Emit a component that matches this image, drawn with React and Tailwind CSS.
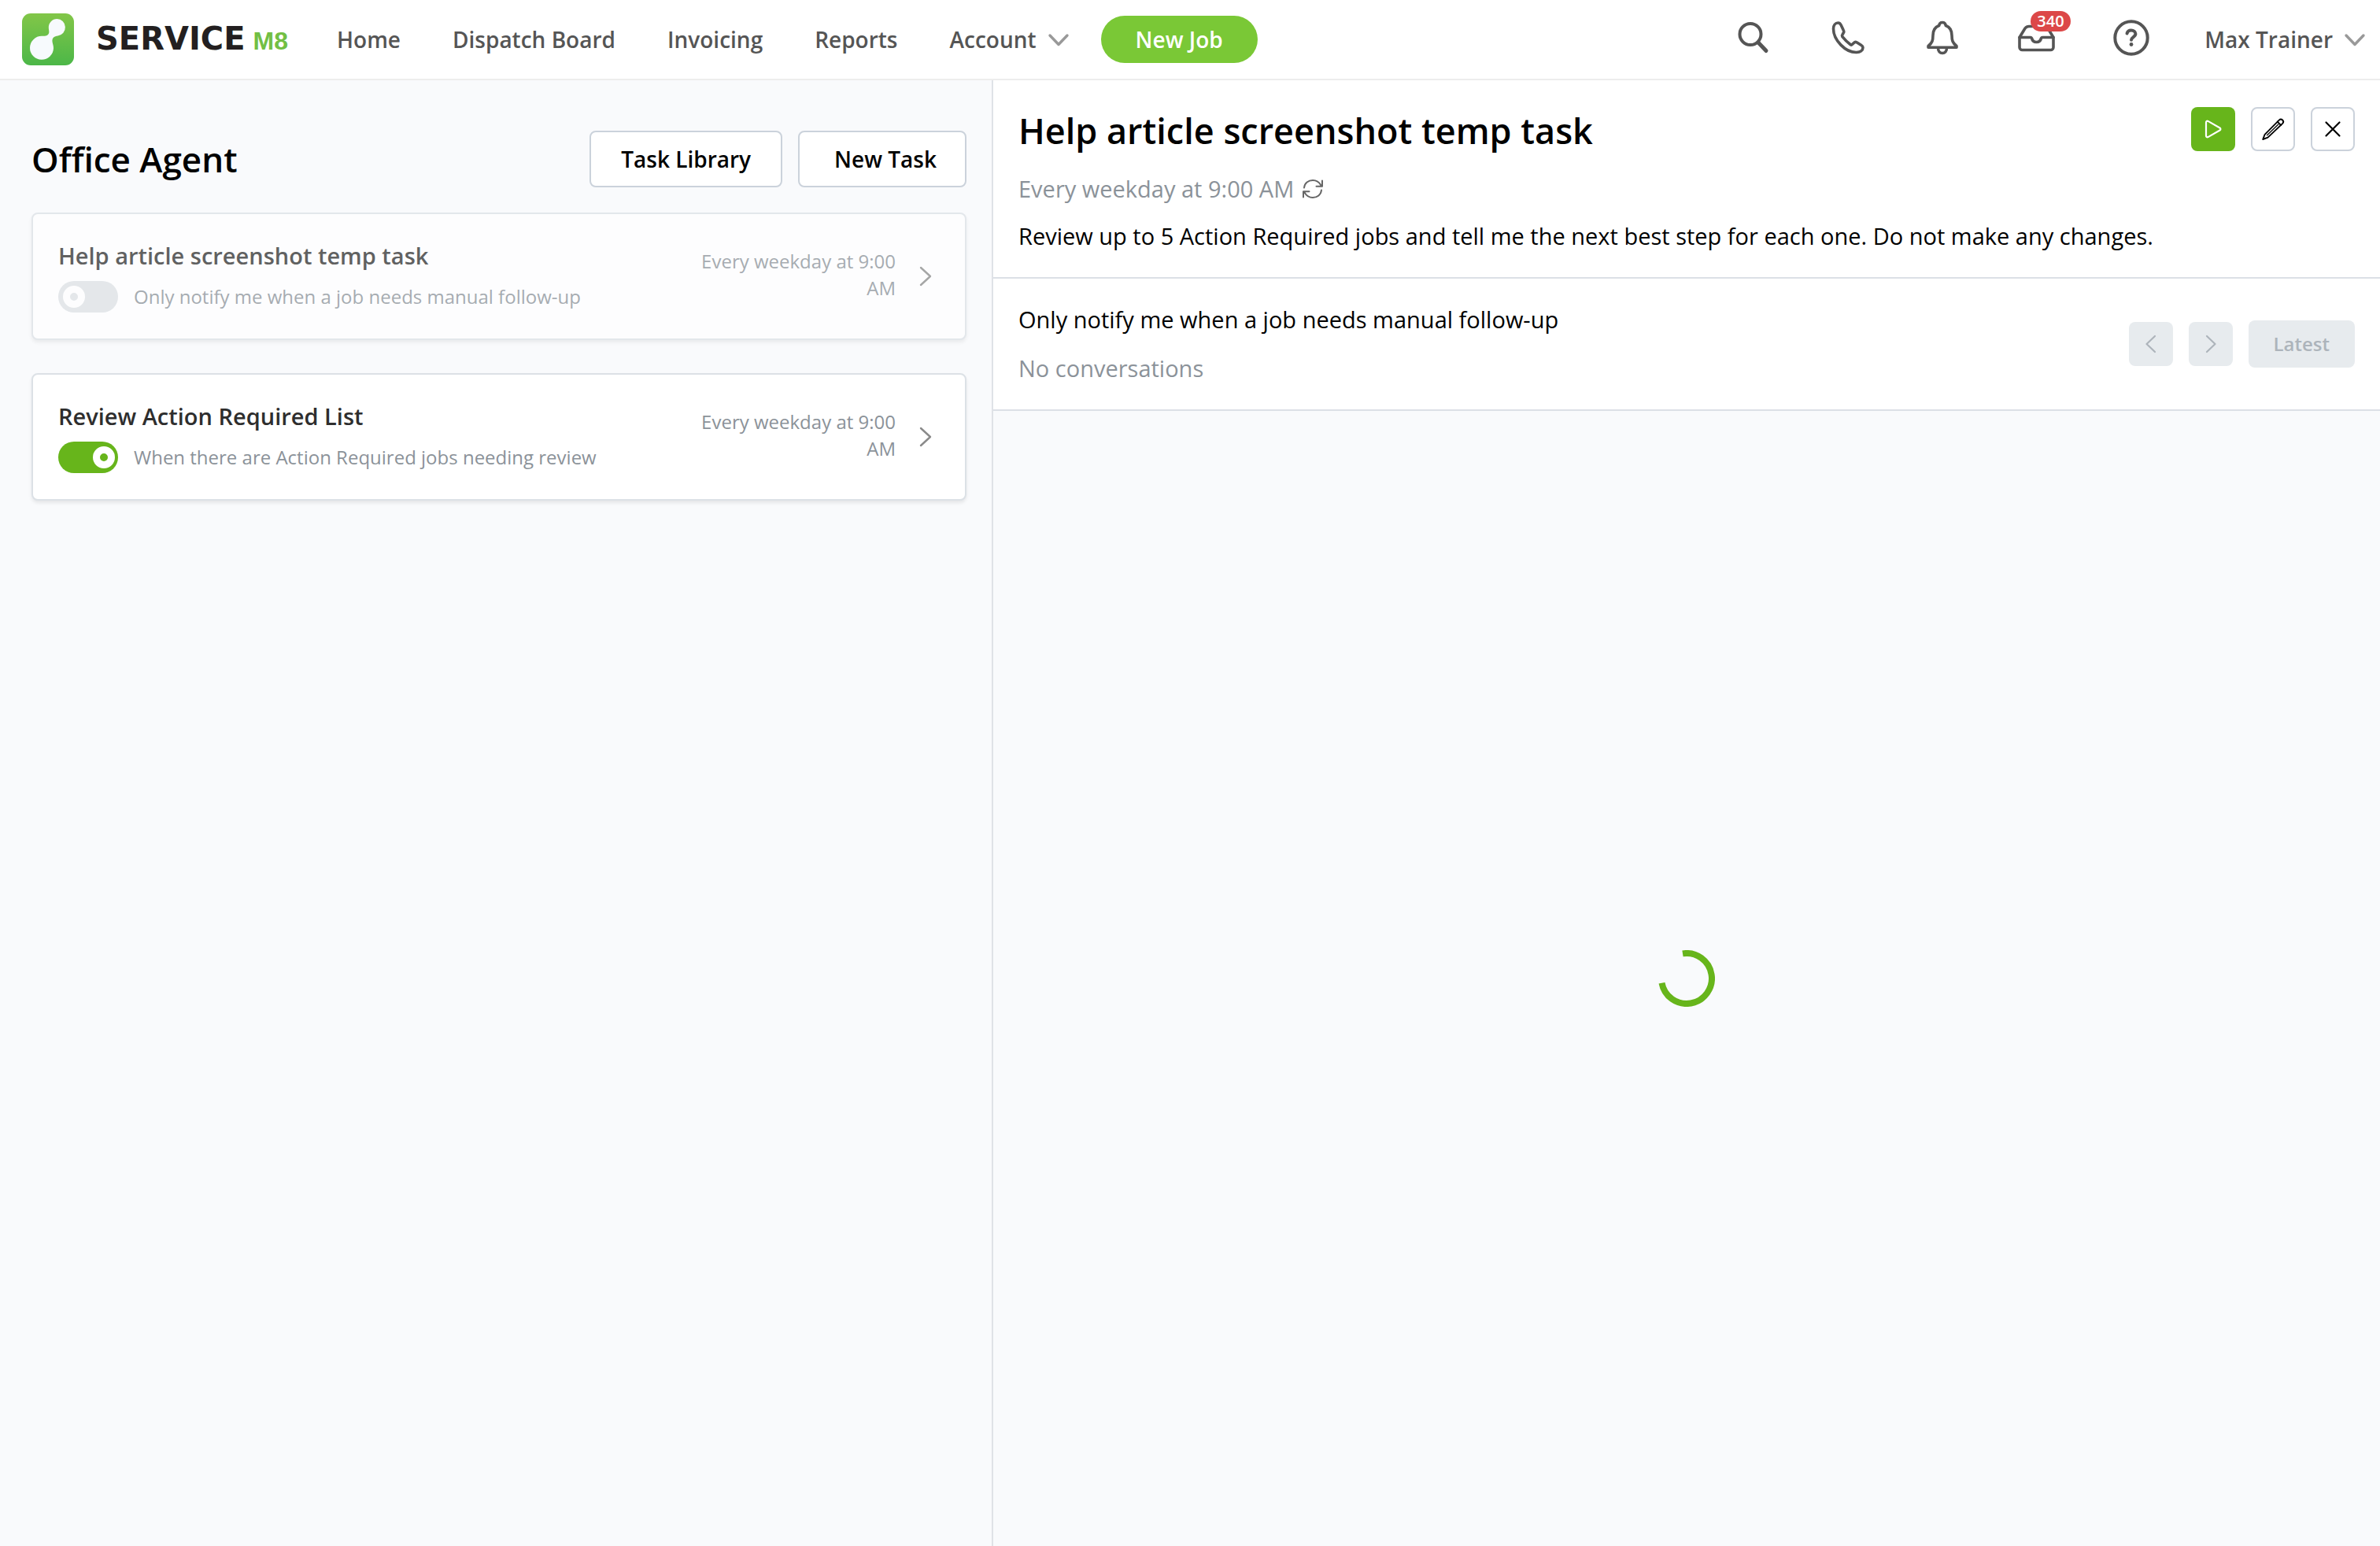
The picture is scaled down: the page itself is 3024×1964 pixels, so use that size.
import React, { useState } from 'react';

const NAV_LINKS = ['Home', 'Dispatch Board', 'Invoicing', 'Reports'];

const TASKS = [
  {
    id: 'help-article',
    title: 'Help article screenshot temp task',
    trigger: 'Only notify me when a job needs manual follow-up',
    schedule: 'Every weekday at 9:00 AM',
    enabled: false,
  },
  {
    id: 'action-required',
    title: 'Review Action Required List',
    trigger: 'When there are Action Required jobs needing review',
    schedule: 'Every weekday at 9:00 AM',
    enabled: true,
  },
];

function Icon({ className, box = '0 0 52 52', width = 4, children }) {
  return (
    <svg
      className={className}
      viewBox={box}
      fill="none"
      stroke="currentColor"
      strokeWidth={width}
      strokeLinecap="round"
      strokeLinejoin="round"
      aria-hidden="true"
    >
      {children}
    </svg>
  );
}

const SearchIcon = () => (
  <Icon className="size-[52px]">
    <circle cx="23" cy="19.5" r="13.5" />
    <path d="M33 30l10 10.5" strokeWidth="5" />
  </Icon>
);

const PhoneIcon = () => (
  <Icon className="size-[52px]" width={3.6}>
    <path d="M14.5 5c-3.5 0-6 3-6 7.5C8.5 27 24 43 38 42.5c4.5-.2 8-2.5 8-6 0-1.5-.8-2.3-2-3L38.5 30c-1.5-.8-3-.6-4 .4l-2.2 2.2c-.6.6-1.4.6-2 .1C26.5 29.8 22.5 25.8 19.7 22.3c-.5-.7-.4-1.4.1-2l1.3-2.3c.8-1 .9-2.2.2-3.4L18 7.5C17.2 6 16 5 14.5 5z" />
  </Icon>
);

const BellIcon = () => (
  <Icon className="size-[52px]" width={3.6}>
    <path d="M27 4.5c-2.5 0-4 1.7-4.3 4C17.5 10.5 15 15 15 21c0 6-.8 9.5-6 13.5V36.2H45V34.5c-5.2-4-6-7.5-6-13.5 0-6-2.5-10.5-7.7-12.5C31 6.2 29.5 4.5 27 4.5z" />
    <path d="M21.5 37c0 4 2.3 6.5 5.5 6.5s5.5-2.5 5.5-6.5" />
  </Icon>
);

const InboxIcon = () => (
  <Icon className="size-[52px]" width={3.6}>
    <path d="M5 23.5V36a3.5 3.5 0 0 0 3.5 3.5h36A3.5 3.5 0 0 0 48 36V23.5L41 12q-2-2.5-5-2.5H17q-3 0-5 2.5z" />
    <path d="M5 23.5H19q1 0 1.5 1c.8 3.5 3 5 6 5s5.2-1.5 6-5q.5-1 1.5-1H48" />
  </Icon>
);

const HelpIcon = () => (
  <Icon className="size-[52px]">
    <circle cx="27" cy="24" r="20.7" />
    <path d="M21.5 18.500c.6-2.700 2.600-4 5.300-4 3.200 0 5.600 1.800 5.600 4.600 0 4-5.400 4-5.400 7.700" />
    <circle cx="27" cy="32.5" r="2.4" fill="currentColor" stroke="none" />
  </Icon>
);

const ChevronDown = () => (
  <Icon className="w-7 h-[18px] text-[#999999]" box="0 0 28 18" width={3.4}>
    <path d="M3 4l11 11.5L25 4" />
  </Icon>
);

function Logo() {
  return (
    <a href="#home" aria-label="ServiceM8" className="flex items-center shrink-0">
      <svg className="size-[66px]" viewBox="0 0 66 66" aria-hidden="true">
        <defs>
          <linearGradient id="logo-green" x1="0" y1="0" x2="0" y2="1">
            <stop offset="0" stopColor="#82c648" />
            <stop offset="1" stopColor="#4cb748" />
          </linearGradient>
        </defs>
        <rect width="66" height="66" rx="11" fill="url(#logo-green)" />
        <path
          fill="#f7fafd"
          d="M44.5 7a10.8 10.8 0 0 1 1 21.5C41 29 38 31 38.5 36c.3 2.5 1.5 4.5 1.5 8.3a15 15 0 1 1-15-15.5c3.5 0 6 .2 8-1.8 2.5-2.5.8-5.5.8-9A10.8 10.8 0 0 1 44.5 7z"
        />
      </svg>
      <span className="ml-7 flex w-[244px] items-baseline justify-between leading-[60px] font-bold">
        <span className="font-['DejaVu_Sans',sans-serif] text-[40px] text-[#231f20]">SERVICE</span>
        <span className="font-['Liberation_Sans',sans-serif] text-[32px] text-[#72bf44]">M8</span>
      </span>
    </a>
  );
}

function TopBar() {
  return (
    <header className="flex items-center h-[102px] shrink-0 border-b-2 border-[#ededed] bg-white pl-7 pr-[18px] text-[28px] leading-10 font-semibold text-[#555555]">
      <Logo />
      <nav className="ml-[62px] flex items-center gap-[66px]">
        {NAV_LINKS.map((label) => (
          <a key={label} href="#nav">{label}</a>
        ))}
        <button className="flex items-center gap-3.5">
          Account
          <ChevronDown />
        </button>
      </nav>
      <button className="ml-10 h-[60px] rounded-full bg-[#7ac836] px-11 text-white">New Job</button>

      <div className="ml-auto flex items-center gap-[68px]">
        <button aria-label="Search"><SearchIcon /></button>
        <button aria-label="Phone"><PhoneIcon /></button>
        <button aria-label="Notifications"><BellIcon /></button>
        <button aria-label="Inbox" className="relative">
          <InboxIcon />
          <span className="absolute -top-2.5 left-[19px] h-[26px] rounded-full bg-[#dc4848] px-2 text-[20px] leading-[26px] text-white">
            340
          </span>
        </button>
        <button aria-label="Help"><HelpIcon /></button>
        <button className="flex items-center gap-3.5">
          Max Trainer
          <ChevronDown />
        </button>
      </div>
    </header>
  );
}

function TaskCard({ task, enabled, onToggle }) {
  return (
    <li
      className={`flex items-center gap-7 min-h-[162px] rounded-lg border-2 border-[#dce1e6] bg-white pl-8 pr-10 shadow-[0_3px_4px_rgba(0,0,0,0.08)] ${enabled ? '' : 'opacity-75'}`}
    >
      <div className="flex-1 min-w-0">
        <h3 className="text-[29px] leading-10 font-semibold text-[#2e2e2e]">{task.title}</h3>
        <label className="mt-3 flex items-center gap-5 text-2xl leading-10 text-[#8b9299]">
          <input
            type="checkbox"
            checked={enabled}
            onChange={onToggle}
            className="flex items-center w-[76px] h-10 shrink-0 appearance-none rounded-full bg-[#dde1e5] px-1.5 before:size-7 before:rounded-full before:border-[9px] before:border-white checked:justify-end checked:bg-[#67b51b] checked:px-1"
          />
          {task.trigger}
        </label>
      </div>
      <p className="w-64 shrink-0 pb-1 text-right text-2xl leading-[34px] text-[#8b9299]">{task.schedule}</p>
      <Icon className="w-5 h-7 shrink-0 text-[#8a8a8a]" box="0 0 20 28" width={2.4}>
        <path d="M4 3l12 11L4 25" />
      </Icon>
    </li>
  );
}

function TaskList() {
  const [enabled, setEnabled] = useState(() =>
    Object.fromEntries(TASKS.map((t) => [t.id, t.enabled]))
  );

  return (
    <section className="col-span-5 pt-16 pl-10 pr-8">
      <div className="flex items-center justify-between">
        <h1 className="text-[44px] leading-[60px] font-semibold">Office Agent</h1>
        <div className="flex gap-5 text-[28px] font-semibold">
          <button className="h-[72px] rounded-lg border-2 border-[#cbd2db] bg-white px-[38px]">Task Library</button>
          <button className="h-[72px] rounded-lg border-2 border-[#cbd2db] bg-white pl-11 pr-9">New Task</button>
        </div>
      </div>
      <ul className="mt-8 flex flex-col gap-[42px]">
        {TASKS.map((task) => (
          <TaskCard
            key={task.id}
            task={task}
            enabled={enabled[task.id]}
            onToggle={() => setEnabled({ ...enabled, [task.id]: !enabled[task.id] })}
          />
        ))}
      </ul>
    </section>
  );
}

function TaskDetail() {
  return (
    <section className="col-span-7 flex flex-col border-l-2 border-[#dfe2e7] text-[29px] leading-10">
      <div className="border-b-2 border-[#dce0e6] bg-white px-8 pt-[34px] pb-8">
        <div className="flex items-start justify-between">
          <h2 className="text-[45px] leading-[60px] font-semibold">Help article screenshot temp task</h2>
          <div className="flex gap-5">
            <button aria-label="Run task" className="flex items-center justify-center size-14 rounded-lg bg-[#67b51b] text-white">
              <Icon className="size-8" box="0 0 32 32" width={2.2}>
                <path d="M7 7.5v17c0 1.4 1.3 2.2 2.5 1.6L24.5 17.5c1.2-.7 1.2-2.3 0-3L9.5 5.9C8.3 5.3 7 6.1 7 7.5z" />
              </Icon>
            </button>
            <button aria-label="Edit task" className="flex items-center justify-center size-14 rounded-lg border-2 border-[#cbd2db] bg-white">
              <Icon className="size-8" box="0 0 32 32" width={1.9}>
                <path d="M3.2 29L5.6 22.8 23.8 4.6a3 3 0 0 1 4.4 4.300L9.500 26.600z" />
                <path d="M21.800 6.600l4.300 4.500" />
                <path d="M22.800 10L8.500 23.800" strokeWidth="1.2" />
              </Icon>
            </button>
            <button aria-label="Close" className="flex items-center justify-center size-14 rounded-lg border-2 border-[#cbd2db] bg-white">
              <Icon className="size-8" box="0 0 32 32" width={2.2}>
                <path d="M7.5 7.5l17 17M24.5 7.5l-17 17" />
              </Icon>
            </button>
          </div>
        </div>
        <p className="mt-6 flex items-center gap-2.5 text-[#8b9299]">
          Every weekday at 9:00 AM
          <Icon className="size-7 text-[#666666]" box="0 0 28 28" width={2}>
            <path d="M3 12.5C3.6 6.5 8.3 3 14 3c4.5 0 8.2 2.5 10.5 6.5M26 3.5v7.2h-7.5" />
            <path d="M25 15.5C24.4 21.5 19.7 25 14 25c-4.5 0-8.2-2.5-10.5-6.5M2 24.5v-7.2h7.5" />
          </Icon>
        </p>
        <p className="mt-5">
          Review up to 5 Action Required jobs and tell me the next best step for each one. Do not make any changes.
        </p>
      </div>

      <div className="flex items-center justify-between border-b-2 border-[#dce0e6] bg-white px-8 py-8">
        <div>
          <p>Only notify me when a job needs manual follow-up</p>
          <p className="mt-[22px] text-[#8b9299]">No conversations</p>
        </div>
        <div className="flex items-center gap-5 text-[#adb4bb]">
          <button disabled aria-label="Previous" className="flex items-center justify-center size-14 rounded-lg bg-[#e7ebee]">
            <Icon className="w-5 h-7" box="0 0 20 28" width={2.2}>
              <path d="M15 4L4.5 14 15 24" />
            </Icon>
          </button>
          <button disabled aria-label="Next" className="flex items-center justify-center size-14 rounded-lg bg-[#e7ebee]">
            <Icon className="w-5 h-7" box="0 0 20 28" width={2.2}>
              <path d="M5 4l10.5 10L5 24" />
            </Icon>
          </button>
          <button disabled className="h-[60px] rounded-lg bg-[#e7ebee] px-8 text-2xl font-semibold">Latest</button>
        </div>
      </div>

      {/* Loading */}
      <div className="flex flex-1 items-center justify-center" role="status" aria-label="Loading">
        <svg className="size-[72px]" viewBox="0 0 72 72" fill="none" aria-hidden="true">
          <path d="M31 4.4A32 32 0 1 1 4.5 41.7" stroke="#67b51b" strokeWidth="8" />
        </svg>
      </div>
    </section>
  );
}

export default function App() {
  return (
    <div className="flex flex-col min-h-screen bg-[#f9fafc] text-black font-['Open_Sans',sans-serif]">
      <TopBar />
      <main className="grid grid-cols-12 flex-1">
        <TaskList />
        <TaskDetail />
      </main>
    </div>
  );
}
